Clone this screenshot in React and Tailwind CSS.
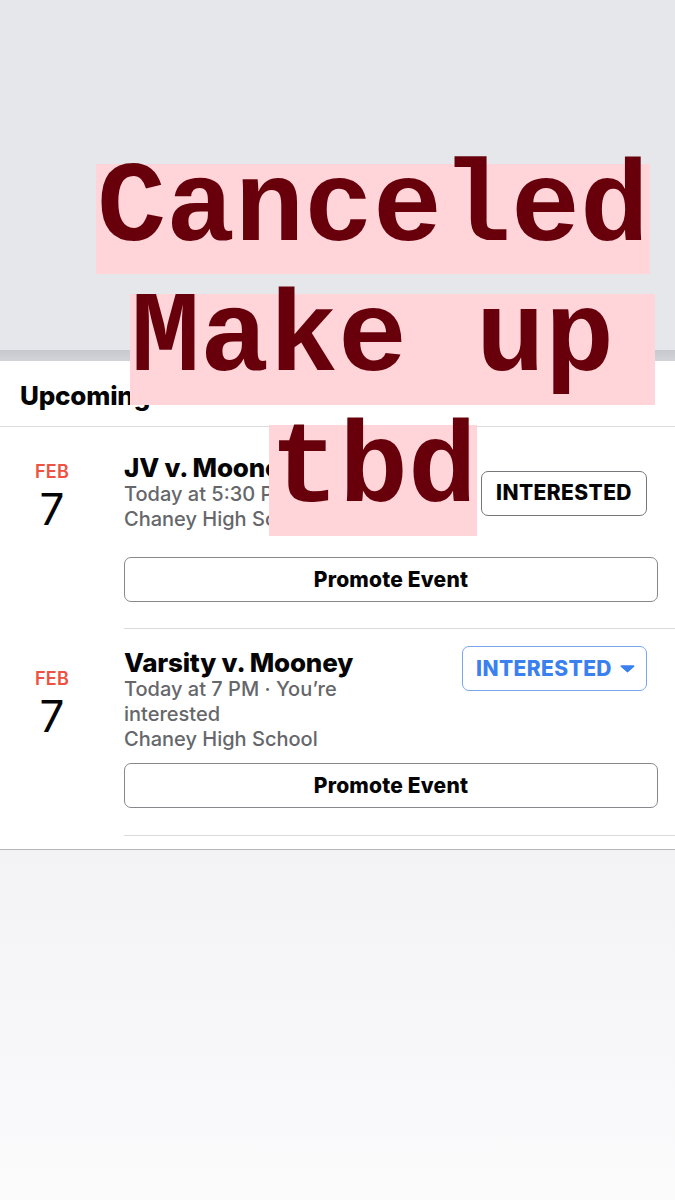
import React from 'react';

const events = [
  {
    id: 1,
    title: 'JV v. Mooney',
    lines: ['Today at 5:30 PM', 'Chaney High School'],
    going: false,
  },
  {
    id: 2,
    title: 'Varsity v. Mooney',
    lines: ['Today at 7 PM · You’re interested', 'Chaney High School'],
    going: true,
  },
];

const Caret = () => (
  <svg width="15" height="9" viewBox="0 0 15 9" className="ml-[8px]">
    <path d="M1.5 1.2h12c.9 0 1.3 1 .7 1.6l-6 5.3c-.4.4-1 .4-1.4 0l-6-5.3C.2 2.2.6 1.2 1.5 1.2z" fill="#3a80ef" />
  </svg>
);

const EventRow = ({ ev, first }) => (
  <div className={first ? 'pt-[27px]' : 'pt-[20px]'}>
    <div className="flex items-center pr-[28px]">
      <div className="w-[124px] pl-[20px] pr-[40px] pt-[7px] flex flex-col items-center shrink-0">
        <span className="text-[18px] leading-[20px] font-semibold text-[#ee5240] tracking-[0.3px]">FEB</span>
        <span className="text-[44px] leading-[46px] text-[#050505] mt-[4px]">7</span>
      </div>
      <div className="flex-1 min-w-0 pr-[50px]">
        <div className="text-[26px] leading-[28px] font-extrabold text-[#050505] tracking-[-0.2px] whitespace-nowrap">
          {ev.title}
        </div>
        {ev.lines.map((l) => (
          <div key={l} className="text-[20px] leading-[25px] font-medium text-[#65676b]">
            {l}
          </div>
        ))}
      </div>
      {ev.going ? (
        <button className="self-start -mt-[3px] h-[45px] w-[185px] shrink-0 rounded-[7px] border-[1.5px] border-[#79a6ee] flex items-center justify-center pl-[2px] text-[21px] font-extrabold text-[#3a80ef] tracking-[0.4px]">
          INTERESTED
          <Caret />
        </button>
      ) : (
        <button className="h-[45px] w-[166px] shrink-0 rounded-[7px] border-[1.5px] border-[#75777b] flex items-center justify-center text-[21px] font-extrabold text-[#050505] tracking-[0.4px]">
          INTERESTED
        </button>
      )}
    </div>
    <div className="ml-[124px]">
      <button
        className={`${first ? 'mt-[25px]' : 'mt-[11px]'} w-[534px] h-[45px] rounded-[7px] border-[1.5px] border-[#86888c] text-[21px] font-extrabold text-[#050505] tracking-[0.2px]`}
      >
        Promote Event
      </button>
      <div className={`${first ? 'mt-[26px]' : 'mt-[27px]'} h-px bg-[#dadbde]`} />
    </div>
  </div>
);

export default function App() {
  return (
    <div
      className="relative w-[675px] h-[1200px] overflow-hidden flex flex-col bg-white"
      style={{ fontFamily: 'Inter, "Noto Sans", sans-serif' }}
    >
      <div className="h-[350px] bg-[#e6e7eb] shrink-0" />
      <div className="h-[11px] bg-gradient-to-b from-[#c8c9ce] to-[#d3d4d8] shrink-0" />

      <div className="bg-white border-b border-[#b5b6bb] pb-[13px] shrink-0">
        <div className="px-[20px] pt-[20px] pb-[15px] border-b border-[#dadbde]">
          <h2 className="text-[26px] leading-[30px] font-extrabold text-[#050505] tracking-[-0.2px]">Upcoming Events</h2>
        </div>
        {events.map((ev, i) => (
          <EventRow key={ev.id} ev={ev} first={i === 0} />
        ))}
      </div>

      <div className="flex-1 bg-gradient-to-b from-[#f3f3f6] to-[#fbfbfc]" />

      {/* story text on top */}
      <div
        className="absolute top-[164px] left-0 flex flex-col items-start gap-[20px] font-bold text-[115px] leading-[91px] text-[#67000a]"
        style={{ fontFamily: '"Liberation Mono", "Courier New", monospace' }}
      >
        <div className="ml-[96px] w-[554px] h-[110px] bg-[#ffd5d9] pl-[1px] whitespace-pre">Canceled</div>
        <div className="ml-[130px] w-[525px] h-[111px] bg-[#ffd5d9] pl-[1px] whitespace-pre">Make up</div>
        <div className="ml-[269px] w-[208px] h-[111px] bg-[#ffd5d9] pl-[1px] whitespace-pre">tbd</div>
      </div>
    </div>
  );
}
